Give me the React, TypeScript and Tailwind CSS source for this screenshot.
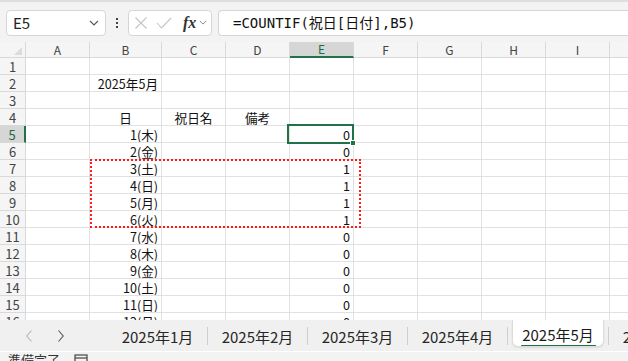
import React from 'react';

// --- Sheet data ---
const COLS = ['A', 'B', 'C', 'D', 'E', 'F', 'G', 'H', 'I', 'J'];
const WEEK = ['木', '金', '土', '日', '月', '火', '水', '木', '金', '土', '日', '月'];
const FLAGS = [0, 0, 1, 1, 1, 1, 0, 0, 0, 0, 0, 0];

type Align = 'left' | 'center' | 'right';
type CellData = { text: string; align: Align };
type RowData = Record<string, CellData>;

const rows: RowData[] = [
  {},
  { B: { text: '2025年5月', align: 'right' } },
  {},
  {
    B: { text: '日', align: 'center' },
    C: { text: '祝日名', align: 'center' },
    D: { text: '備考', align: 'center' },
  },
  ...WEEK.map((w, i) => ({
    B: { text: `${i + 1}(${w})`, align: 'right' as Align },
    E: { text: String(FLAGS[i]), align: 'right' as Align },
  })),
];

const GRID = 'grid grid-cols-[26px_64px_72px_64px_64px_64px_64px_64px_64px_64px_64px]';
const ALIGN: Record<Align, string> = {
  left: 'justify-start pl-[3px]',
  center: 'justify-center',
  right: 'justify-end pr-[3px]',
};

const Chevron = ({ className }: { className?: string }) => (
  <svg viewBox="0 0 10 6" className={className} fill="none" stroke="currentColor" strokeWidth="1.1">
    <path d="M1 1l4 4 4-4" />
  </svg>
);

const FormulaBar = () => (
  <div className="h-[42px] shrink-0 bg-[#f3f3f3] border-t-2 border-[#dedede] flex items-center pt-[1px]">
    {/* Name box */}
    <div className="ml-[6px] w-[100px] h-[26px] bg-white border border-[#d6d6d6] rounded-[4px] flex items-center pl-[6px] pr-[6px]">
      <span className="text-[15px] text-[#222] leading-none flex-1">E5</span>
      <Chevron className="w-[10px] h-[6px] text-[#555]" />
    </div>
    {/* vertical dots */}
    <div className="w-[22px] flex flex-col items-center gap-[2px]">
      <span className="w-[2px] h-[2px] bg-[#444]" />
      <span className="w-[2px] h-[2px] bg-[#444]" />
      <span className="w-[2px] h-[2px] bg-[#444]" />
    </div>
    {/* cancel / enter / fx */}
    <div className="w-[84px] h-[26px] bg-white border border-[#d6d6d6] rounded-[4px] flex items-center pl-[4px]">
      <svg viewBox="0 0 14 14" className="w-[14px] h-[14px] ml-[1px]" stroke="#c4c4c4" strokeWidth="1.1" fill="none">
        <path d="M1.5 1.5l11 11M12.5 1.5l-11 11" />
      </svg>
      <svg viewBox="0 0 16 12" className="w-[16px] h-[12px] ml-[8px]" stroke="#c4c4c4" strokeWidth="1.1" fill="none">
        <path d="M1 6l4.5 5L15 1" />
      </svg>
      <span className="ml-[11px] text-[16px] italic font-semibold text-[#333] leading-none font-['Liberation_Serif',serif]">fx</span>
      <Chevron className="ml-[3px] w-[8px] h-[5px] text-[#777]" />
    </div>
    {/* Formula input */}
    <div className="ml-[6px] flex-1 h-[26px] bg-white border border-r-0 border-[#d6d6d6] rounded-l-[4px] flex items-center pl-[14px]">
      <span className="text-[14px] text-[#111] leading-none whitespace-nowrap font-['DejaVu_Sans_Mono','Noto_Sans_CJK_JP',monospace]">
        =COUNTIF(祝日[日付],B5)
      </span>
    </div>
  </div>
);

const Sheet = () => (
  <div className="relative h-[278px] shrink-0 overflow-hidden bg-white">
    {/* column headers */}
    <div className={`${GRID} h-[16px]`}>
      <div className="relative bg-[#f5f5f5] border-r border-b border-[#d9d9d9]">
        <svg viewBox="0 0 8 8" className="absolute right-[3px] bottom-[2px] w-[8px] h-[8px]">
          <path d="M8 0v8H0z" fill="#dcdcdc" />
        </svg>
      </div>
      {COLS.map((c) => {
        const sel = c === 'E';
        return (
          <div
            key={c}
            className={`flex items-center justify-center text-[12px] leading-none border-r border-[#dadada] ${
              sel ? 'bg-[#d6d6d6] text-[#1e6b41] border-b-2 border-b-[#217346]' : 'bg-[#f5f5f5] text-[#444] border-b border-b-[#d9d9d9]'
            }`}
          >
            {c}
          </div>
        );
      })}
    </div>

    {/* body rows */}
    {rows.map((row, ri) => {
      const n = ri + 1;
      const sel = n === 5;
      return (
        <div key={n} className={`${GRID} h-[17px]`}>
          <div
            className={`flex items-center justify-center text-[13px] leading-none border-b border-[#d9d9d9] pt-[1px] ${
              sel
                ? 'bg-[#d6d6d6] text-[#1e6b41] border-r-2 border-r-[#217346]'
                : 'bg-[#f5f5f5] text-[#444] border-r border-r-[#d9d9d9]'
            }`}
          >
            {n}
          </div>
          {COLS.map((c) => {
            const cell = row[c];
            return (
              <div
                key={c}
                className={`flex items-center overflow-hidden border-r border-b border-[#e1e1e1] text-[12.6px] leading-none text-[#111] whitespace-nowrap pt-[2px] ${
                  cell ? ALIGN[cell.align] : ''
                }`}
              >
                {cell?.text}
              </div>
            );
          })}
        </div>
      );
    })}

    {/* copy marquee */}
    <div className="absolute left-[90px] top-[117px] w-[271px] h-[69px] border-2 border-dotted border-[#ff1a1a] pointer-events-none" />

    {/* active cell E5 */}
    <div className="absolute left-[287px] top-[82px] w-[67px] h-[20px] border-2 border-[#217346] pointer-events-none" />
    <div className="absolute left-[350px] top-[98px] w-[6px] h-[6px] bg-[#217346] border border-white pointer-events-none" />
  </div>
);

const TABS = ['2025年1月', '2025年2月', '2025年3月', '2025年4月'];

const TabBar = () => (
  <div className="h-[31px] shrink-0 bg-[#f0f0f0] flex items-start overflow-hidden">
    <div className="w-[108px] h-full flex items-center shrink-0">
      <svg viewBox="0 0 6 12" className="ml-[26px] w-[6px] h-[12px]" fill="none" stroke="#b5b5b5" strokeWidth="1.1">
        <path d="M5.5 0.5L0.8 6l4.7 5.5" />
      </svg>
      <svg viewBox="0 0 6 12" className="ml-[26px] w-[6px] h-[12px]" fill="none" stroke="#555" strokeWidth="1.1">
        <path d="M0.5 0.5L5.2 6l-4.7 5.5" />
      </svg>
    </div>
    {TABS.map((t) => (
      <div key={t} className="w-[100px] h-full shrink-0 flex items-center">
        <span className="flex-1 text-center text-[15px] text-[#262626] leading-none pt-[2px]">{t}</span>
        <span className="w-px h-[18px] bg-[#cfcfcf]" />
      </div>
    ))}
    <div className="w-[100px] shrink-0 px-[4px]">
      <div className="h-[27px] bg-white border border-t-0 border-[#dcdcdc] rounded-b-[6px] shadow-[0_1px_2px_rgba(0,0,0,0.08)] flex flex-col items-center pt-[7px]">
        <span className="text-[15px] text-[#1a1a1a] leading-none">2025年5月</span>
        <span className="mt-[3px] w-[75px] h-[3px] bg-[#217346] rounded-full" />
      </div>
    </div>
    <div className="w-[100px] h-full shrink-0 flex items-center">
      <span className="w-px h-[18px] bg-[#cfcfcf]" />
      <span className="flex-1 text-center text-[15px] text-[#262626] leading-none pt-[2px]">2025年6月</span>
    </div>
  </div>
);

const StatusBar = () => (
  <div className="h-[10px] shrink-0 bg-[#f3f3f3] border-t border-white flex items-start overflow-hidden">
    <span className="ml-[8px] mt-[1px] text-[13px] text-[#333] leading-none">準備完了</span>
    <svg viewBox="0 0 14 12" className="ml-[14px] mt-[2px] w-[14px] h-[12px]" fill="none" stroke="#444" strokeWidth="1.2">
      <rect x="1" y="1" width="12" height="10" />
      <path d="M1 4h12" />
    </svg>
  </div>
);

export default function App() {
  return (
    <div className="w-[628px] h-[361px] flex flex-col overflow-hidden bg-white font-['Noto_Sans_CJK_JP','Noto_Sans',sans-serif]">
      <FormulaBar />
      <Sheet />
      <TabBar />
      <StatusBar />
    </div>
  );
}
